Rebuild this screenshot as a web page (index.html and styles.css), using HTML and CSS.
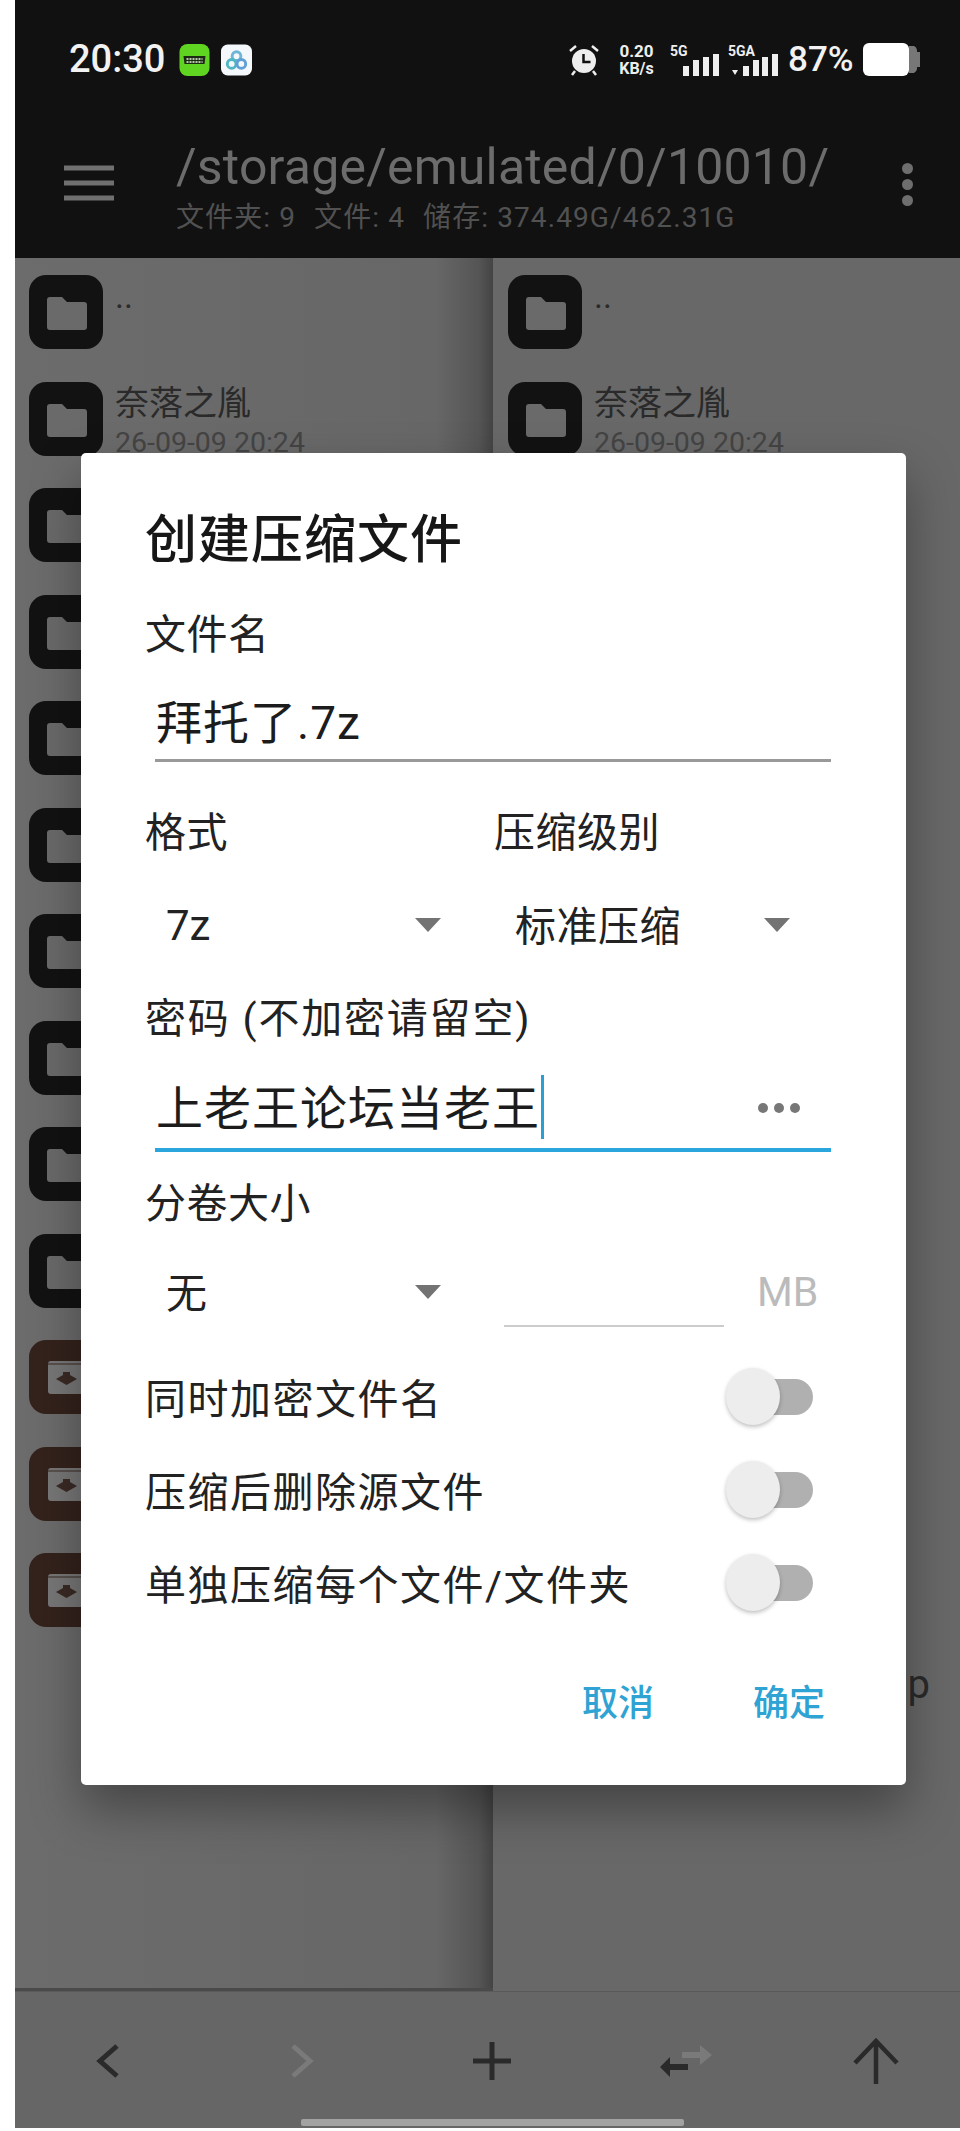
FILE: index.html
```html
<!DOCTYPE html>
<html lang="zh-CN">
<head>
<meta charset="utf-8">
<title>创建压缩文件</title>
<link rel="stylesheet" href="styles.css">
</head>
<body>
<svg class="defs" width="0" height="0" aria-hidden="true">
  <symbol id="folder" viewBox="0 0 74 74">
    <rect width="74" height="74" rx="17" fill="#121212"/>
    <path d="M18 25a3 3 0 0 1 3-3h12l5 5h17a3 3 0 0 1 3 3v22a3 3 0 0 1-3 3H21a3 3 0 0 1-3-3z" fill="#6a6a6a"/>
  </symbol>
  <symbol id="archive" viewBox="0 0 74 74">
    <rect width="74" height="74" rx="17" fill="#34221c"/>
    <rect x="19" y="21" width="37" height="33" rx="3" fill="#777"/>
    <path d="M19 24h37" stroke="#3a2a25" stroke-width="1"/>
    <path d="M27 39l7-4v-3h7v3l7 4-10.500 6z" fill="#3a2a25"/>
  </symbol>
  <symbol id="tri" viewBox="0 0 26 14">
    <path d="M0 0h26L13 14z" fill="#737373"/>
  </symbol>
</svg>

<div class="phone">
  <header class="top">
    <div class="status">
      <div class="status-left">
        <span class="time">20:30</span>
        <svg class="app" viewBox="0 0 30 32"><rect width="30" height="32" rx="8" fill="#5fd521"/><path d="M4 12h22l-1 8H5z" fill="#1c2a14"/><path d="M7 15h16M7 18h16" stroke="#e8ffd8" stroke-width="1.500" stroke-dasharray="2 1"/></svg>
        <svg class="app" viewBox="0 0 32 32"><rect width="32" height="32" rx="7" fill="#f4f8fa"/><circle cx="16" cy="12" r="4.500" fill="none" stroke="#6fb5d8" stroke-width="3"/><circle cx="11" cy="20" r="4.500" fill="none" stroke="#4fb6c4" stroke-width="3"/><circle cx="21" cy="20" r="4.500" fill="none" stroke="#5f9fd8" stroke-width="3"/></svg>
      </div>
      <div class="status-right">
        <svg class="alarm" viewBox="0 0 32 32"><circle cx="16" cy="17" r="12" fill="#eee"/><path d="M2 7l6-5M30 7l-6-5M7 27l-3 4M25 27l3 4" stroke="#eee" stroke-width="2.500"/><path d="M15.500 10v8h7" fill="none" stroke="#111" stroke-width="2.500"/></svg>
        <div class="speed"><span>0.20</span><span>KB/s</span></div>
        <div class="sig sig-5g">
          <span class="net">5G</span>
          <svg class="bars" viewBox="0 0 36 22"><path d="M0 12h6v10H0zM10 6h6v16h-6zM20 3h6v19h-6zM30 0h6v22h-6z" fill="#eee"/></svg>
        </div>
        <div class="sig sig-5ga">
          <span class="net">5GA</span>
          <svg class="bars wide" viewBox="0 0 49 22"><path d="M3 16h6l-3 5zM14 12h6v10h-6zM24 6h6v16h-6zM33 3h6v19h-6zM43 0h6v22h-6z" fill="#eee"/></svg>
        </div>
        <span class="pct">87%</span>
        <svg class="battery" viewBox="0 0 57 33"><path d="M46 3h5a5 5 0 0 1 3 4v2h3v15h-3v2a5 5 0 0 1-3 4h-5z" fill="#777"/><rect width="46" height="33" rx="6" fill="#fff"/></svg>
      </div>
    </div>
    <div class="appbar">
      <svg class="menu" viewBox="0 0 50 36"><path d="M0 3h50M0 18h50M0 33h50" stroke="#707070" stroke-width="5"/></svg>
      <div class="where">
        <div class="path">/storage/emulated/0/10010/</div>
        <div class="info"><span>文件夹: 9</span><span>文件: 4</span><span>储存: 374.49G/462.31G</span></div>
      </div>
      <div class="more"><i></i><i></i><i></i></div>
    </div>
  </header>

  <main class="panels">
    <section class="panel panel-left">
      <div class="row"><svg class="ico"><use href="#folder"/></svg><div class="meta"><div class="name">..</div></div></div>
      <div class="row"><svg class="ico"><use href="#folder"/></svg><div class="meta"><div class="name">奈落之胤</div><div class="date">26-09-09 20:24</div></div></div>
      <div class="row"><svg class="ico"><use href="#folder"/></svg></div>
      <div class="row"><svg class="ico"><use href="#folder"/></svg></div>
      <div class="row"><svg class="ico"><use href="#folder"/></svg></div>
      <div class="row"><svg class="ico"><use href="#folder"/></svg></div>
      <div class="row"><svg class="ico"><use href="#folder"/></svg></div>
      <div class="row"><svg class="ico"><use href="#folder"/></svg></div>
      <div class="row"><svg class="ico"><use href="#folder"/></svg></div>
      <div class="row"><svg class="ico"><use href="#folder"/></svg></div>
      <div class="row"><svg class="ico"><use href="#archive"/></svg></div>
      <div class="row"><svg class="ico"><use href="#archive"/></svg></div>
      <div class="row"><svg class="ico"><use href="#archive"/></svg></div>
    </section>
    <section class="panel panel-right">
      <div class="row"><svg class="ico"><use href="#folder"/></svg><div class="meta"><div class="name">..</div></div></div>
      <div class="row"><svg class="ico"><use href="#folder"/></svg><div class="meta"><div class="name">奈落之胤</div><div class="date">26-09-09 20:24</div></div></div>
      <div class="tail">.zip</div>
    </section>
  </main>

  <footer class="toolbar">
    <svg class="tool" viewBox="0 0 44 44"><path d="M30 7L13 22l17 15" fill="none" stroke="#2a2a2a" stroke-width="5"/></svg>
    <svg class="tool" viewBox="0 0 44 44"><path d="M14 7l17 15-17 15" fill="none" stroke="#7a7a7a" stroke-width="5"/></svg>
    <svg class="tool" viewBox="0 0 44 44"><path d="M3 22h38M22 3v38" stroke="#2a2a2a" stroke-width="5"/></svg>
    <svg class="tool" viewBox="0 0 60 44"><path d="M28 13h18V6l12 10-12 10v-7H28z" fill="#7a7a7a"/><path d="M34 25H16v-7L6 28l10 10v-7h18z" fill="#2a2a2a"/></svg>
    <svg class="tool" viewBox="0 0 44 44"><path d="M1 24L22 2l21 22M22 2v43" fill="none" stroke="#2a2a2a" stroke-width="4.500"/></svg>
    <div class="home"></div>
  </footer>

  <div class="dialog">
    <h1 class="title">创建压缩文件</h1>
    <div class="label first">文件名</div>
    <div class="field">拜托了.7z</div>
    <div class="pair pair-head">
      <div class="label">格式</div>
      <div class="label">压缩级别</div>
    </div>
    <div class="pair pair-select">
      <div class="select"><span class="v-latin">7z</span><svg class="arrow"><use href="#tri"/></svg></div>
      <div class="select"><span class="v-cjk">标准压缩</span><svg class="arrow"><use href="#tri"/></svg></div>
    </div>
    <div class="label pw-label">密码 (不加密请留空)</div>
    <div class="field focus"><span>上老王论坛当老王</span><i class="caret"></i><span class="eye"><i></i><i></i><i></i></span></div>
    <div class="label vol-label">分卷大小</div>
    <div class="pair pair-vol">
      <div class="select"><span class="v-cjk">无</span><svg class="arrow"><use href="#tri"/></svg></div>
      <div class="volsize"><div class="volinput"></div><span class="mb">MB</span></div>
    </div>
    <div class="switches">
      <div class="switch-row"><span>同时加密文件名</span><div class="toggle"><i class="thumb"></i></div></div>
      <div class="switch-row"><span>压缩后删除源文件</span><div class="toggle"><i class="thumb"></i></div></div>
      <div class="switch-row"><span>单独压缩每个文件/文件夹</span><div class="toggle"><i class="thumb"></i></div></div>
    </div>
    <div class="actions"><span>取消</span><span>确定</span></div>
  </div>
</div>
</body>
</html>
```
FILE: styles.css
```css
* { box-sizing: border-box; }
html, body { margin: 0; padding: 0; height: 2131px; overflow: hidden; background: #fff; }
body { font-family: Roboto, "Noto Sans CJK SC", sans-serif; }
.defs { position: absolute; }

.phone { position: relative; margin-left: 15px; width: 945px; height: 2128px; overflow: hidden; background: #686868; display: flex; flex-direction: column; }

/* header */
.top { height: 258px; padding-top: 43px; background: #111; flex: none; }
.status { height: 33px; padding: 0 40px 0 54px; display: flex; justify-content: space-between; align-items: center; }
.status-left { display: flex; align-items: center; }
.time { color: #f2f2f2; font-size: 38px; font-weight: 500; line-height: 33px; width: 95px; margin-right: 15px; white-space: nowrap; }
.app { width: 31px; height: 32px; margin-right: 11px; }
.status-right { display: flex; align-items: center; }
.alarm { width: 32px; height: 32px; margin-right: 16px; }
.speed { display: flex; flex-direction: column; align-items: center; color: #eee; font-weight: 700; font-size: 17px; line-height: 17px; width: 41px; margin-right: 13px; }
.speed span:last-child { font-size: 16px; }
.sig { position: relative; height: 33px; }
.sig-5g { width: 49px; margin-right: 9px; }
.sig-5ga { width: 50px; margin-right: 10px; }
.net { position: absolute; left: 0; top: 1px; color: #eee; font-size: 14px; line-height: 14px; font-weight: 700; }
.bars { position: absolute; right: 0; bottom: 0; width: 36px; height: 22px; }
.bars.wide { width: 49px; }
.pct { color: #f2f2f2; font-size: 35px; line-height: 33px; font-weight: 500; width: 65px; margin-right: 10px; white-space: nowrap; }
.battery { width: 57px; height: 33px; }

.appbar { display: flex; align-items: flex-start; margin-top: 60px; padding-left: 49px; }
.menu { width: 50px; height: 36px; margin-top: 29px; flex: none; }
.where { margin-left: 62px; width: 700px; flex: none; }
.path { color: #6c6c6c; font-size: 50px; line-height: 62px; letter-spacing: .2px; white-space: nowrap; }
.info { color: #515151; font-size: 28px; line-height: 40px; letter-spacing: 1.100px; display: flex; gap: 18px; white-space: nowrap; }
.more { display: flex; flex-direction: column; gap: 5px; margin-left: 26px; margin-top: 27px; }
.more i { width: 11px; height: 11px; border-radius: 50%; background: #6e6e6e; display: block; }

/* file panels */
.panels { flex: none; height: 1733px; display: flex; }
.panel { padding-top: 17px; }
.panel-left { width: 478px; background: linear-gradient(90deg, #6c6c6c 0, #676767 88%, #555 97%, #444 100%); border-bottom: 3px solid #4a4a4a; }
.panel-right { flex: 1; }
.row { height: 106.500px; padding-left: 14px; display: flex; align-items: flex-start; gap: 12px; }
.panel-right .row { padding-left: 15px; }
.ico { width: 74px; height: 74px; flex: none; }
.meta { padding-top: 1px; }
.name { color: #2a2a2a; font-size: 34px; line-height: 40px; white-space: nowrap; }
.date { color: #444; font-size: 28.500px; line-height: 40px; white-space: nowrap; }
.tail { margin-top: 1175px; padding-right: 30px; text-align: right; color: #2a2a2a; font-size: 40px; line-height: 44px; }

/* bottom bar */
.toolbar { position: relative; flex: 1; margin-left: -2px; background: #666; border-top: 1px solid #5a5a5a; display: grid; grid-template-columns: repeat(5, 191.700px); justify-items: center; align-items: start; padding-top: 47px; }
.tool { width: 44px; height: 44px; overflow: visible; }
.toolbar .tool:nth-child(4) { width: 60px; }
.home { position: absolute; left: 288px; bottom: 2px; width: 383px; height: 7px; border-radius: 2px; background: #a2a2a2; }

/* dialog */
.dialog { position: absolute; left: 66px; top: 453px; width: 825px; height: 1332px; background: #fff; border-radius: 5px; padding: 58px 0 0 64px; color: #1c1c1c; box-shadow: 0 24px 50px rgba(0, 0, 0, .35); display: flex; flex-direction: column; }
.title { margin: 0; font-size: 52px; line-height: 60px; font-weight: 500; letter-spacing: 1px; color: #171717; }
.label { font-size: 41px; line-height: 50px; letter-spacing: .5px; color: #222; white-space: nowrap; }
.label.first { margin-top: 39px; }
.field { margin: 30px 0 0 10px; width: 676px; height: 72px; border-bottom: 3px solid #999; padding-left: 1px; font-size: 46px; line-height: 66px; letter-spacing: 1px; color: #1c1c1c; display: flex; align-items: flex-start; white-space: nowrap; }
.pair { display: grid; grid-template-columns: 349px 1fr; }
.pair-head { margin-top: 46px; }
.pair-select { margin-top: 37px; }
.select { width: 296px; height: 60px; padding-left: 21px; display: flex; justify-content: space-between; align-items: center; font-size: 41px; color: #222; }
.v-latin { font-size: 42px; }
.v-cjk { margin-bottom: 4px; letter-spacing: .5px; }
.arrow { width: 26px; height: 14px; flex: none; }
.pw-label { margin-top: 39px; letter-spacing: 1.800px; }
.focus { margin-top: 31px; height: 77px; padding-top: 1px; border-bottom: 4px solid #2ba6dc; font-size: 47px; }
.caret { width: 3px; height: 64px; background: #2b9fd4; display: block; margin-left: 1px; margin-top: -1px; }
.eye { margin-left: auto; margin-right: 31px; margin-top: 27px; display: flex; gap: 6px; }
.eye i { width: 10px; height: 10px; border-radius: 50%; background: #777; display: block; }
.vol-label { margin-top: 27px; }
.pair-vol { margin-top: 33px; height: 66px; }
.volsize { display: flex; align-items: flex-start; margin-left: 10px; }
.volinput { width: 220px; height: 65px; border-bottom: 2px solid #ccc; flex: none; }
.mb { margin-left: 33px; font-size: 41px; line-height: 60px; color: #bbb; }
.switches { margin-top: 22px; padding-right: 93px; }
.switch-row { height: 93px; display: flex; justify-content: space-between; align-items: center; font-size: 41px; letter-spacing: 1.500px; color: #222; white-space: nowrap; }
.switch-row > span { margin-bottom: 2px; }
.toggle { position: relative; width: 87px; height: 57px; flex: none; display: flex; justify-content: flex-end; align-items: center; }
.toggle::before { content: ""; width: 60px; height: 36px; border-radius: 18px; background: #b0b0b0; }
.thumb { position: absolute; left: 0; top: 0; width: 54px; height: 57px; border-radius: 50%; background: #ededed; box-shadow: 0 2px 4px rgba(0, 0, 0, .25); }
.actions { margin-top: 50px; padding-right: 81px; display: flex; justify-content: flex-end; gap: 99px; font-size: 36px; line-height: 50px; color: #2fa3d3; font-weight: 500; }
```
